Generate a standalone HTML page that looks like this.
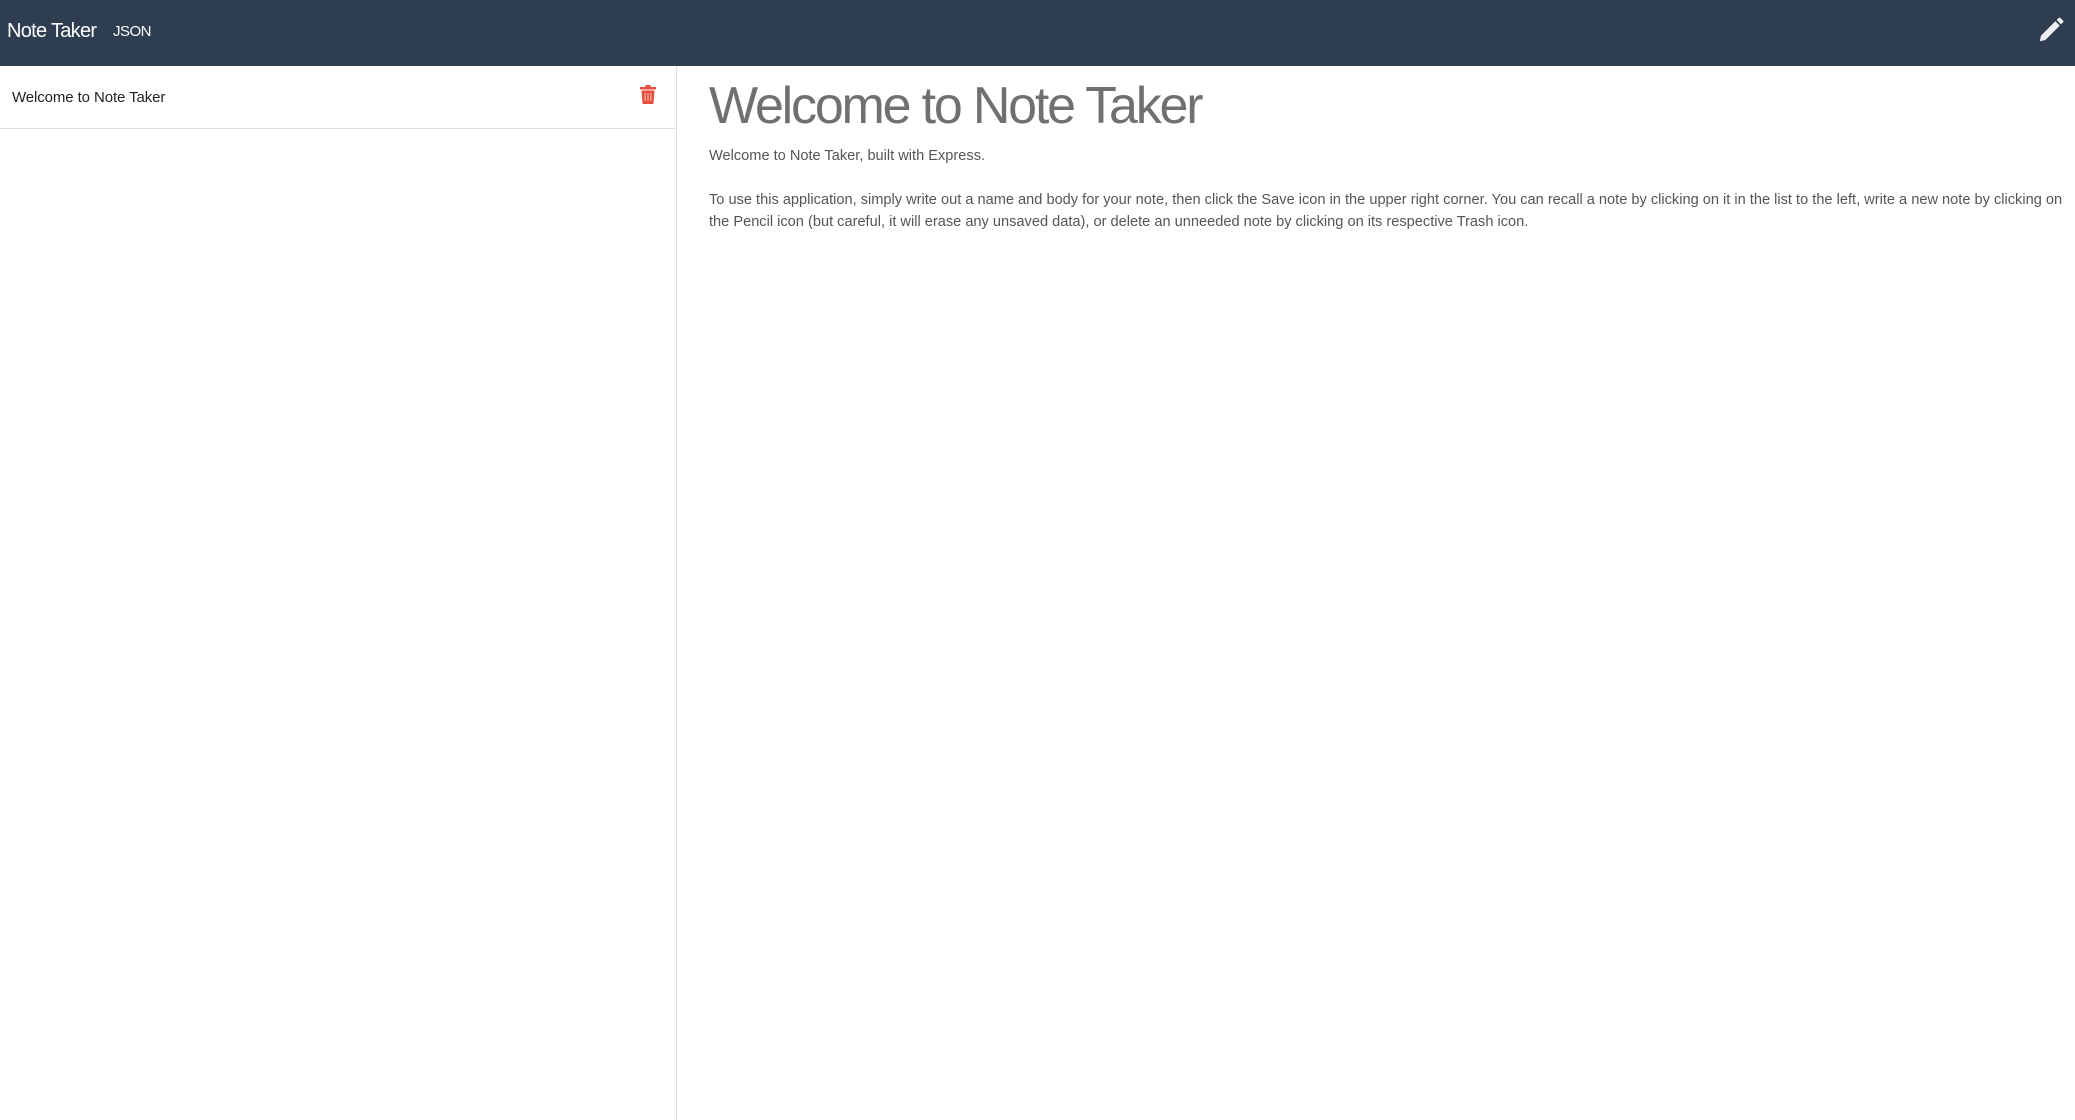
<!DOCTYPE html>
<html><head><meta charset="utf-8"><style>
html,body{margin:0;padding:0;width:2075px;height:1120px;overflow:hidden;background:#fff;font-family:"Liberation Sans",sans-serif;}
.nav{position:absolute;left:0;top:0;width:2075px;height:66px;background:#2e3e50;}
.brand{position:absolute;left:7px;top:20px;color:#fff;font-size:20px;letter-spacing:-0.7px;}
.json{position:absolute;left:113px;top:23px;color:#fff;font-size:15px;letter-spacing:-0.5px;}
.pencil{position:absolute;left:2036px;top:15px;}
.side{position:absolute;left:0;top:66px;width:676px;height:1054px;border-right:1px solid #ddd;}
.item{position:absolute;left:0;top:0;width:675px;height:62px;border-bottom:1px solid #ddd;}
.item span{position:absolute;left:12px;top:23px;font-size:15px;color:#222;letter-spacing:-0.1px;}
.trash{position:absolute;left:640px;top:19px;}
.main{position:absolute;left:709px;top:0;}
h1{position:absolute;left:0;top:76px;margin:0;font-weight:normal;font-size:52px;color:#707070;white-space:nowrap;letter-spacing:-2.2px;}
p{position:absolute;left:0;margin:0;font-size:14.6px;color:#555;white-space:nowrap;line-height:22px;}
</style></head><body>
<div class="nav">
<div class="brand">Note Taker</div>
<div class="json">JSON</div>
<svg class="pencil" width="30" height="30" viewBox="0 0 24 24"><path fill="#eef1f3" d="M3 21l1-4.5L15.5 5l3.5 3.5L7.5 20z M16.5 4l1.5-1.5a1.2 1.2 0 0 1 1.7 0l1.8 1.8a1.2 1.2 0 0 1 0 1.7L20 7.5z"/></svg>
</div>
<div class="side"><div class="item"><span>Welcome to Note Taker</span>
<svg class="trash" width="16" height="19" viewBox="0 0 16 19"><rect x="5.5" y="0" width="5" height="2" fill="#e74c3c"/><rect x="0" y="2" width="16" height="2.5" rx="0.5" fill="#e74c3c"/><path d="M1.5 5.5h13l-1 12.5a1 1 0 0 1-1 1h-9a1 1 0 0 1-1-1z" fill="#e74c3c"/><rect x="4.5" y="8" width="1.2" height="8" fill="#f5b5ae"/><rect x="7.4" y="8" width="1.2" height="8" fill="#f5b5ae"/><rect x="10.3" y="8" width="1.2" height="8" fill="#f5b5ae"/></svg>
</div></div>
<div class="main">
<h1>Welcome to Note Taker</h1>
<p style="top:145px">Welcome to Note Taker, built with Express.</p>
<p style="top:189px">To use this application, simply write out a name and body for your note, then click the Save icon in the upper right corner. You can recall a note by clicking on it in the list to the left, write a new note by clicking on<br>the Pencil icon (but careful, it will erase any unsaved data), or delete an unneeded note by clicking on its respective Trash icon.</p>
</div>
</body></html>
